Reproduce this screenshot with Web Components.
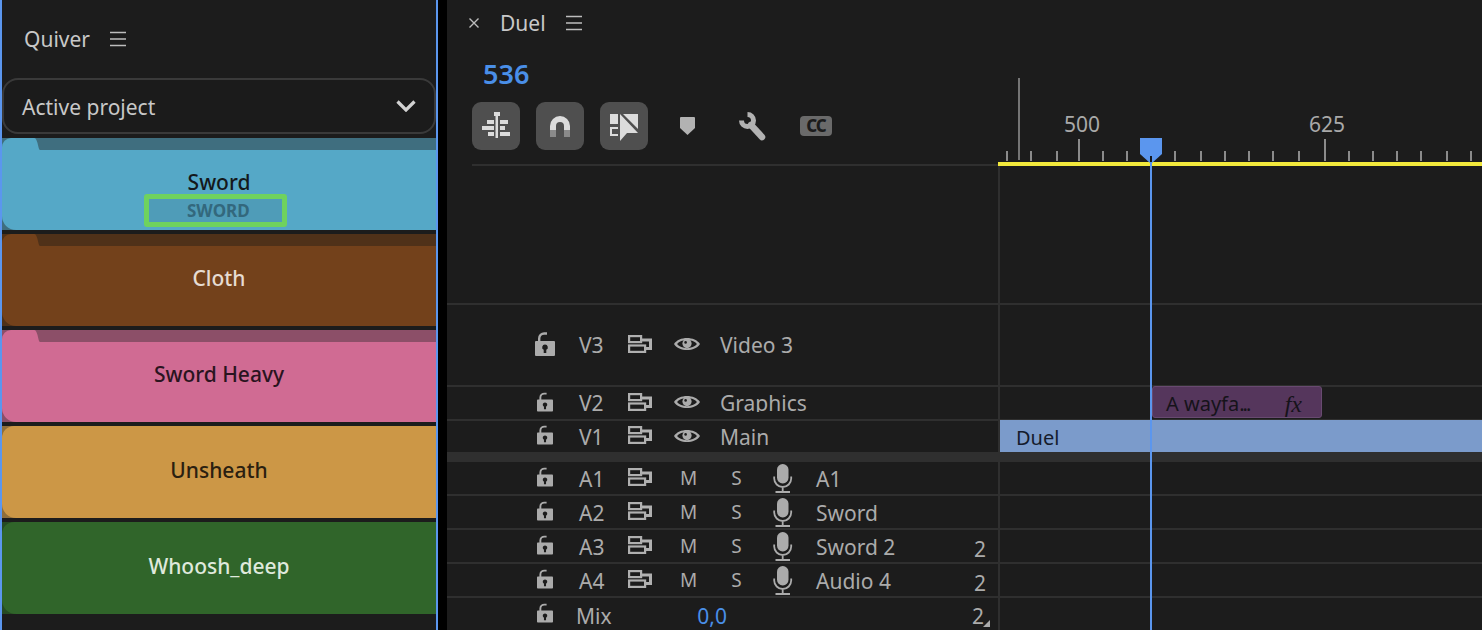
<!DOCTYPE html>
<html>
<head>
<meta charset="utf-8">
<title>Quiver</title>
<style>
  html, body { margin: 0; height: 630px; overflow: hidden; background: #000; }
  body {
    display: grid;
    grid-template-columns: 438px 1fr;
    column-gap: 9px;
    font-family: "Noto Sans", "Open Sans", sans-serif;
    font-size: 21px;
  }
  .dots { letter-spacing: -2px; }
</style>
</head>
<body>
  <quiver-panel>
    <quiver-folder style="--c:#55a8c7;--s:#3f6e7f;--ink:#14181b">
      Sword
      <span slot="sub">SWORD</span>
    </quiver-folder>
    <quiver-folder style="--c:#73411b;--s:#4f3119;--ink:#e6dcd2">Cloth</quiver-folder>
    <quiver-folder style="--c:#d06b93;--s:#8c4f68;--ink:#2a1420">Sword Heavy</quiver-folder>
    <quiver-folder flat style="--c:#cc9746;--s:#8f6e3a;--ink:#2a2010">Unsheath</quiver-folder>
    <quiver-folder flat style="--c:#30652a;--s:#264a23;--ink:#dfe9dc">Whoosh_deep</quiver-folder>
  </quiver-panel>

  <seq-panel>
    <track-row kind="video" label="V3" name="Video 3" big style="--h:80px"></track-row>
    <track-row kind="video" label="V2" name="Graphics" cut style="--h:32px">
      <seq-clip style="--clip:#55365c;--edge:#684a70;--x:152px;--w:170px;--ink:#16131a">A wayfa<span class="dots">...</span><i slot="fx">fx</i></seq-clip>
    </track-row>
    <track-row kind="video" label="V1" name="Main" style="--h:31px">
      <seq-clip plain style="--clip:#7b9bcb;--edge:#7b9bcb;--x:0px;--w:482px;--ink:#151c2c">Duel</seq-clip>
    </track-row>
    <track-gap></track-gap>
    <track-row kind="audio" label="A1" name="A1" first style="--h:32px"></track-row>
    <track-row kind="audio" label="A2" name="Sword" style="--h:32px"></track-row>
    <track-row kind="audio" label="A3" name="Sword 2" count="2" style="--h:32px"></track-row>
    <track-row kind="audio" label="A4" name="Audio 4" count="2" style="--h:32px"></track-row>
    <track-row kind="mix" label="Mix" name="0,0" count="2" style="--h:32px"></track-row>
  </seq-panel>

<script>
const burger = `<svg width="16" height="16" viewBox="0 0 16 16" fill="none" stroke="#bdbdbd" stroke-width="1.6"><path d="M0 1.5H16M0 8H16M0 14.5H16"/></svg>`

const icons = {
  lock: (w, h) => `<svg width="${w}" height="${h}" viewBox="0 0 20 24"><path d="M4.2 10V6.5A5 5 0 0 1 9.2 1.5H12" fill="none" stroke="#ababab" stroke-width="2.4"/><path fill="#ababab" fill-rule="evenodd" d="M1 9H19a1 1 0 0 1 1 1V23a1 1 0 0 1-1 1H1a1 1 0 0 1-1-1V10a1 1 0 0 1 1-1ZM10 12.5a2.8 2.8 0 0 0-1.3 5.3V21h2.6V17.8A2.8 2.8 0 0 0 10 12.5Z"/></svg>`,
  sync: `<svg width="24" height="18" viewBox="0 0 24 18"><g fill="none" stroke="#b0b0b0" stroke-width="2.2"><rect x="1.100" y="1.100" width="12" height="6"/><rect x="1.100" y="10.500" width="16" height="6.400"/></g><path fill="#b0b0b0" d="M13 3.500H24V15H17V12H21V6.500H13Z"/></svg>`,
  eye: `<svg width="26" height="16" viewBox="0 0 26 16"><path fill="#ababab" fill-rule="evenodd" d="M0 8C5 0 21 0 26 8C21 16 5 16 0 8ZM3 8C7 13.5 19 13.5 23 8C19 2.5 7 2.5 3 8Z"/><circle cx="13" cy="7.600" r="4.600" fill="#ababab"/><circle cx="11.600" cy="6.400" r="1.300" fill="#1c1c1c"/></svg>`,
  mic: `<svg width="20" height="29" viewBox="0 0 20 29"><rect x="4" y="0" width="11.500" height="19.500" rx="5.700" fill="#ababab"/><path d="M1.200 12.500V14.500a8.500 8.500 0 0 0 17 0V12.500M9.700 23V27.500M2.500 28H17" fill="none" stroke="#ababab" stroke-width="1.800"/></svg>`
}

class QuiverPanel extends HTMLElement {
  constructor() {
    super()
    this.attachShadow({ mode: 'open' })
    this.shadowRoot.innerHTML = `
      <style>
        :host {
          display: flex;
          flex-direction: column;
          box-sizing: border-box;
          height: 630px;
          background: #1c1c1c;
          border-left: 2px solid #5b96ee;
          border-right: 2px solid #5b96ee;
        }
        .head {
          height: 78px;
          box-sizing: border-box;
          padding: 0 0 0 22px;
          display: flex;
          align-items: flex-start;
          gap: 20px;
          color: #c8c8c8;
        }
        .head span { line-height: 28px; margin-top: 25px; }
        .head svg { margin-top: 31px; }
        .select {
          height: 56px;
          box-sizing: border-box;
          border: 2px solid #3a3a3a;
          border-radius: 16px;
          background: #1b1b1b;
          display: flex;
          align-items: center;
          justify-content: space-between;
          padding: 0 18px;
          color: #c8c8c8;
        }
        .select span { padding-top: 2px; }
        .list {
          display: flex;
          flex-direction: column;
          gap: 4px;
          margin-top: 4px;
        }
      </style>
      <div class="head"><span>Quiver</span>${burger}</div>
      <div class="select">
        <span>Active project</span>
        <svg width="20" height="12" viewBox="0 0 20 12" fill="none" stroke="#d2d2d2" stroke-width="3.200"><path d="M1.500 1.500L10 10L18.500 1.500"/></svg>
      </div>
      <div class="list"><slot></slot></div>
    `
  }
}
customElements.define('quiver-panel', QuiverPanel)

class QuiverFolder extends HTMLElement {
  constructor() {
    super()
    this.attachShadow({ mode: 'open' })
    this.shadowRoot.innerHTML = `
      <style>
        :host {
          display: flex;
          flex-direction: column;
          height: 92px;
          background: var(--s);
          color: var(--ink);
        }
        .top {
          height: 12px;
          display: flex;
        }
        .tab {
          width: 31px;
          background: var(--c);
          border-top-left-radius: 9px;
        }
        .top svg { fill: var(--c); }
        .face {
          flex: 1;
          background: var(--c);
          border-bottom-left-radius: 14px;
          padding-top: 20px;
          text-align: center;
          line-height: 24px;
          font-weight: 500;
        }
        :host([flat]) .tab { flex: 1; border-top-left-radius: 14px; }
        :host([flat]) .top svg { display: none; }
        ::slotted([slot="sub"]) {
          display: inline-block;
          box-sizing: border-box;
          width: 143px;
          height: 33px;
          margin-right: 7px;
          padding-left: 38px;
          text-align: left;
          border: 5px solid #6fd25e;
          border-radius: 3px;
          background: #4f9cb8;
          color: #33687d;
          font-size: 17px;
          font-weight: 700;
          line-height: 23px;
        }
      </style>
      <div class="top">
        <div class="tab"></div>
        <svg width="7" height="12" viewBox="0 0 7 12"><path d="M0 0H1C3 0 3.500 2 4.500 5C5.500 9 6 12 7 12H0Z"/></svg>
      </div>
      <div class="face"><slot></slot><br><slot name="sub"></slot></div>
    `
  }
}
customElements.define('quiver-folder', QuiverFolder)

class SeqRuler extends HTMLElement {
  constructor() {
    super()
    this.attachShadow({ mode: 'open' })
    const small = [1007, 1031, 1057, 1103, 1127, 1151, 1175, 1201, 1225, 1249, 1273, 1299, 1349, 1373, 1397, 1421, 1447, 1471]
    const ticks = small.map(x => `<rect x="${x - 998 - 1}" y="151" width="2" height="10" fill="#8b8b8b"/>`).join('')
    this.shadowRoot.innerHTML = `
      <style>
        :host { display: block; height: 166px; }
        svg { display: block; }
        text { font-size: 21px; fill: #a9a9a9; text-anchor: middle; }
      </style>
      <svg width="484" height="166" viewBox="0 0 484 166">
        <rect x="20" y="78" width="2" height="82" fill="#757575"/>
        <text x="84" y="132">500</text>
        <text x="329" y="132">625</text>
        <rect x="80" y="139" width="2" height="22" fill="#8b8b8b"/>
        <rect x="326" y="139" width="2" height="22" fill="#8b8b8b"/>
        ${ticks}
        <rect x="0" y="162" width="484" height="4" fill="#f2e93c"/>
      </svg>
    `
  }
}
customElements.define('seq-ruler', SeqRuler)

class SeqPanel extends HTMLElement {
  constructor() {
    super()
    this.attachShadow({ mode: 'open' })
    this.shadowRoot.innerHTML = `
      <style>
        :host {
          display: flex;
          flex-direction: column;
          position: relative;
          height: 630px;
          overflow: hidden;
          background: #1c1c1c;
          color: #c8c8c8;
        }
        .top { display: flex; height: 166px; }
        .left {
          width: 551px;
          flex: none;
          display: flex;
          flex-direction: column;
        }
        .tabs {
          height: 46px;
          display: flex;
          align-items: center;
          padding-left: 22px;
        }
        .tabs span { margin-left: 21px; margin-right: 20px; line-height: 46px; }
        .time {
          margin: 11px 0 0 36px;
          line-height: 34px;
          font-size: 27px;
          font-weight: 600;
          color: #4a8fe8;
        }
        .tools {
          margin: 11px 0 0 25px;
          display: flex;
          align-items: center;
          gap: 16px;
        }
        .btn {
          width: 48px;
          height: 48px;
          border-radius: 9px;
          background: #4f4f4f;
        }
        .btn svg { display: block; }
        .shield { margin-left: 16px; }
        .wrench { margin-left: 27px; }
        .cc {
          margin-left: 18px;
          width: 32px;
          height: 20px;
          border-radius: 4px;
          background: #6a6a6a;
          color: #1c1c1c;
          font-size: 17px;
          font-weight: 800;
          line-height: 20px;
          text-align: center;
          letter-spacing: -1px;
        }
        .line {
          margin: auto 0 0 25px;
          height: 2px;
          background: #2f2f2f;
        }
        .right { flex: 1; }
        .blank {
          height: 137px;
          box-sizing: border-box;
          margin-left: 551px;
          border-left: 2px solid #2f2f2f;
        }
        .head {
          position: absolute;
          left: 693px;
          top: 138px;
          display: block;
        }
      </style>
      <div class="top">
        <div class="left">
          <div class="tabs">
            <svg width="10" height="10" viewBox="0 0 10 10" stroke="#bdbdbd" stroke-width="1.400"><path d="M.5 .5L9.500 9.500M9.500 .5L.5 9.500"/></svg>
            <span>Duel</span>
            ${burger}
          </div>
          <div class="time">536</div>
          <div class="tools">
            <div class="btn"><svg width="48" height="48" viewBox="0 0 48 48" fill="#dcdcdc">
              <rect x="23.500" y="10" width="2.500" height="26"/><rect x="22" y="10" width="6" height="4"/>
              <rect x="15" y="18" width="7" height="4"/><rect x="10" y="24" width="12" height="4"/><rect x="16" y="30" width="6" height="4"/>
              <rect x="28" y="18" width="8" height="4"/><rect x="28" y="24" width="5" height="4"/><rect x="28" y="30" width="10" height="4"/>
            </svg></div>
            <div class="btn"><svg width="48" height="48" viewBox="0 0 48 48" fill="none" stroke-width="6">
              <path d="M17 28V24A7 7 0 0 1 31 24V28" stroke="#dcdcdc"/>
              <path d="M17 28V35M31 28V35" stroke="#8a8a8a"/>
            </svg></div>
            <div class="btn"><svg width="48" height="48" viewBox="0 0 48 48" fill="#dcdcdc">
              <rect x="10" y="12" width="8" height="10"/>
              <path d="M10 25H18V27H12V32H18V34H10Z"/>
              <path d="M20 12L38 31H27L20 39Z"/>
              <path d="M23 12H38V27Z"/>
            </svg></div>
            <svg class="shield" width="15" height="18" viewBox="0 0 15 18" fill="#b2b2b2"><path d="M1 0H14a1 1 0 0 1 1 1V11L7.500 18L0 11V1a1 1 0 0 1 1-1Z"/></svg>
            <svg class="wrench" width="28" height="29" viewBox="0 0 28 29" fill="none" stroke="#b2b2b2"><path d="M3.500 8.500A6 6 0 1 0 9.500 2.500" stroke-width="5"/><path d="M13 13L24 25" stroke-width="6.500" stroke-linecap="round"/></svg>
            <div class="cc">CC</div>
          </div>
          <div class="line"></div>
        </div>
        <seq-ruler class="right"></seq-ruler>
      </div>
      <div class="blank"></div>
      <slot></slot>
      <svg class="head" width="22" height="492" viewBox="0 0 22 492">
        <rect x="10" y="20" width="2" height="472" fill="#5b96ee"/>
        <path d="M0 0H22V16L12 25H10L0 16Z" fill="#5b96ee"/>
        <rect x="10" y="18" width="2" height="6" fill="#14181f"/>
      </svg>
    `
  }
}
customElements.define('seq-panel', SeqPanel)

class TrackGap extends HTMLElement {
  constructor() {
    super()
    this.attachShadow({ mode: 'open' })
    this.shadowRoot.innerHTML = `<style>:host { display: block; height: 10px; background: #2f2f2f; }</style>`
  }
}
customElements.define('track-gap', TrackGap)

class TrackRow extends HTMLElement {
  constructor() {
    super()
    this.attachShadow({ mode: 'open' })
  }
  connectedCallback() {
    const kind = this.getAttribute('kind')
    const label = this.getAttribute('label')
    const name = this.getAttribute('name')
    const count = this.getAttribute('count')
    const big = this.hasAttribute('big')
    const lock = big ? icons.lock(20, 24) : icons.lock(16, 20)

    let cells = ''
    if (kind == 'video') {
      cells = `<div class="c sync">${icons.sync}</div><div class="c eye">${icons.eye}</div><div class="name">${name}</div>`
    }
    if (kind == 'audio') {
      cells = `<div class="c sync">${icons.sync}</div><div class="c m">M</div><div class="c s">S</div><div class="c mic">${icons.mic}</div><div class="name">${name}</div>`
    }
    if (kind == 'mix') {
      cells = `<div class="vol">${name}</div>`
    }

    this.shadowRoot.innerHTML = `
      <style>
        :host {
          display: block;
          border-top: 2px solid #2f2f2f;
          color: #ababab;
        }
        :host([first]) { border-top: 0; }
        .row { display: flex; height: var(--h); }
        .left {
          width: 551px;
          flex: none;
          box-sizing: border-box;
          padding: 0 12px 0 88px;
          display: flex;
          align-items: center;
          line-height: 24px;
        }
        .lock { width: 44px; flex: none; margin-top: -3px; padding-left: 2px; box-sizing: border-box; }
        :host([big]) .lock { padding-left: 0; }
        .lock svg, .c svg { display: block; }
        .label { width: 49px; flex: none; box-sizing: border-box; }
        .c { flex: none; }
        .sync { width: 46px; margin-top: -3px; }
        .eye { width: 46px; margin-top: -2px; }
        .m { width: 28px; padding-left: 6px; box-sizing: border-box; font-size: 19px; }
        .s { width: 69px; text-align: center; font-size: 19px; }
        .mic { width: 45px; padding-left: 2px; box-sizing: border-box; }
        .name { flex: 1; white-space: nowrap; }
        :host([kind="audio"]) .label, :host([kind="audio"]) .name { padding-top: 2px; }
        :host([cut]) .name { clip-path: inset(0 0 3px 0); }
        .vol { width: 79px; text-align: right; flex: none; padding-top: 3px; color: #4a8fe8; }
        :host([kind="mix"]) .label { padding: 3px 0 0; width: 0; white-space: nowrap; margin-left: -3px; }
        .count { margin-left: auto; flex: none; padding-top: 6px; }
        :host([kind="mix"]) .count { padding-top: 4px; position: relative; margin-right: 2px; }
        :host([kind="mix"]) .count::after {
          content: '';
          position: absolute;
          right: -6px;
          bottom: 1px;
          border-left: 7px solid transparent;
          border-bottom: 7px solid #ababab;
        }
        .right {
          flex: 1;
          min-width: 0;
          border-left: 2px solid #2f2f2f;
          overflow: visible;
        }
      </style>
      <div class="row">
        <div class="left">
          <div class="lock">${lock}</div>
          <div class="label">${label}</div>
          ${kind == 'mix' ? '<div style="width:72px;flex:none"></div>' : ''}
          ${cells}
          ${count ? `<div class="count">${count}</div>` : ''}
        </div>
        <div class="right"><slot></slot></div>
      </div>
    `
  }
}
customElements.define('track-row', TrackRow)

class SeqClip extends HTMLElement {
  constructor() {
    super()
    this.attachShadow({ mode: 'open' })
    this.shadowRoot.innerHTML = `
      <style>
        :host {
          display: flex;
          align-items: center;
          justify-content: space-between;
          box-sizing: border-box;
          height: 32px;
          width: var(--w);
          margin-top: -1px;
          margin-left: var(--x);
          padding: 3px 19px 0 13px;
          background: var(--clip);
          border: 1px solid var(--edge);
          border-radius: 3px;
          color: var(--ink);
          font-size: 20px;
          line-height: 24px;
        }
        :host([plain]) { border-radius: 0; padding-left: 15px; }
        ::slotted(i) { font-family: "Liberation Serif", serif; font-size: 24px; }
      </style>
      <span><slot></slot></span>
      <slot name="fx"></slot>
    `
  }
}
customElements.define('seq-clip', SeqClip)
</script>
</body>
</html>
